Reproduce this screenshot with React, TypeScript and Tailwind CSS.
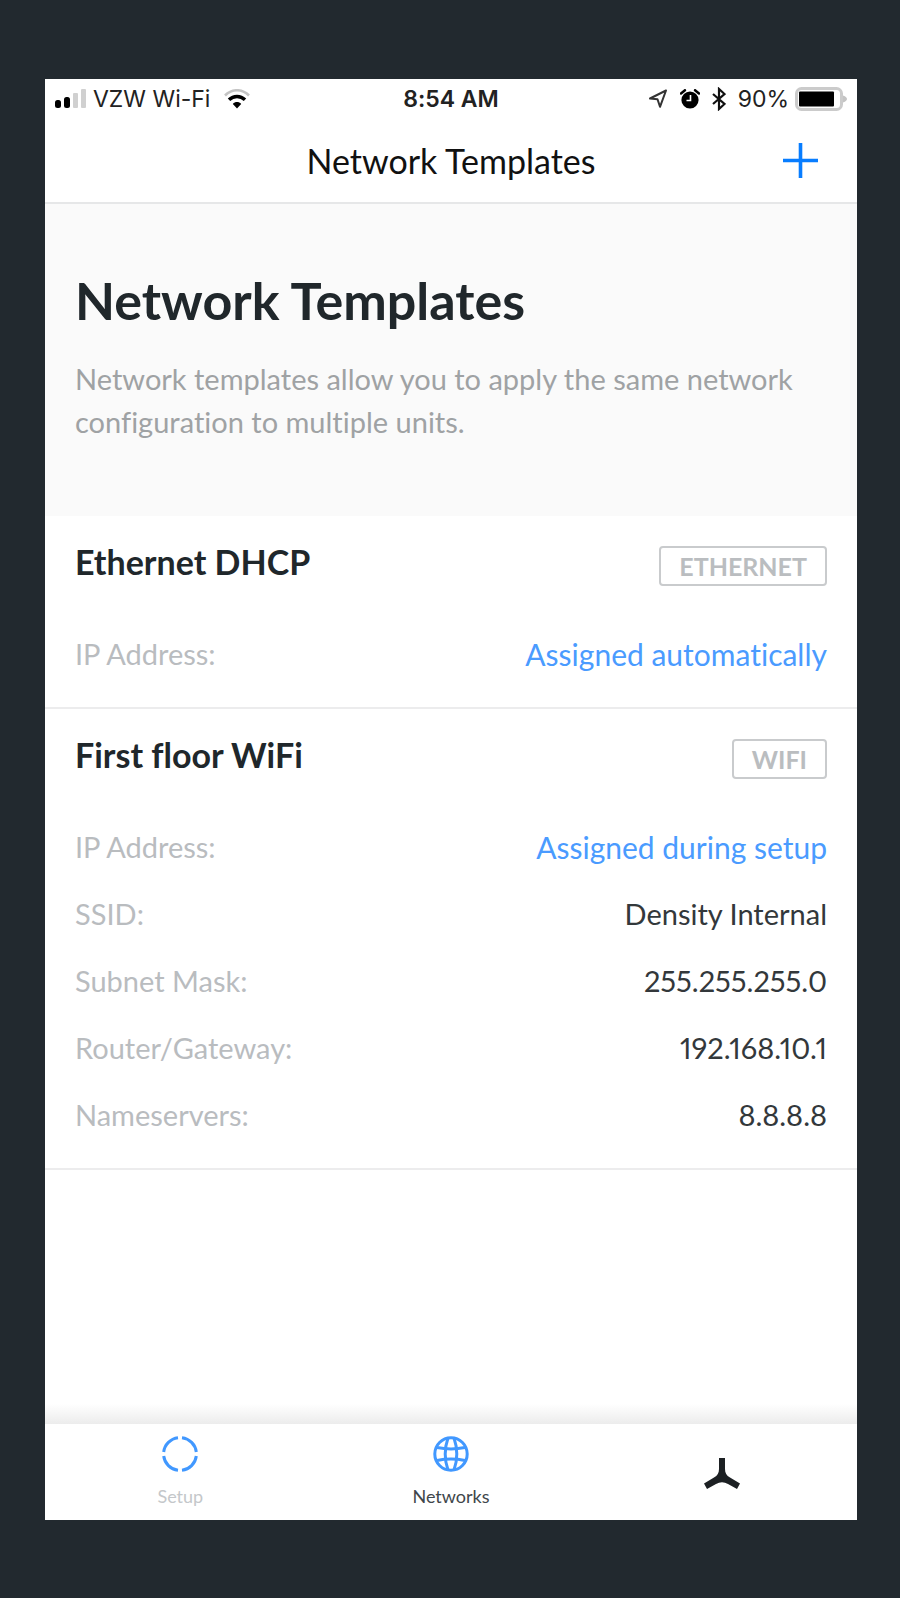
import type { ReactNode } from 'react';

type Row = { label: string; value: string; auto?: boolean };
type Template = { id: string; name: string; kind: string; rows: Row[] };

const templates: Template[] = [
  {
    id: 'ethernet',
    name: 'Ethernet DHCP',
    kind: 'ETHERNET',
    rows: [{ label: 'IP Address:', value: 'Assigned automatically', auto: true }],
  },
  {
    id: 'wifi',
    name: 'First floor WiFi',
    kind: 'WIFI',
    rows: [
      { label: 'IP Address:', value: 'Assigned during setup', auto: true },
      { label: 'SSID:', value: 'Density Internal' },
      { label: 'Subnet Mask:', value: '255.255.255.0' },
      { label: 'Router/Gateway:', value: '192.168.10.1' },
      { label: 'Nameservers:', value: '8.8.8.8' },
    ],
  },
];

function SignalIcon() {
  return (
    <svg width="32" height="20" viewBox="0 0 32 20" aria-hidden="true">
      <rect x="0" y="11" width="6" height="8" rx="2.500" fill="#000" />
      <rect x="9" y="8" width="6" height="11" rx="2.500" fill="#000" />
      <rect x="18" y="4" width="5" height="15" rx="1" fill="#d0d0d0" />
      <rect x="26" y="0" width="5" height="19" rx="1" fill="#d0d0d0" />
    </svg>
  );
}

function WifiIcon() {
  return (
    <svg width="26" height="20" viewBox="0 0 26 20" fill="none" aria-hidden="true">
      <path d="M1 6.500C8 -0.500 18 -0.500 25 6.500" stroke="#c4c4c4" strokeWidth="2.600" />
      <path d="M5 10.800C9.500 6.300 16.500 6.300 21 10.800" stroke="#000" strokeWidth="3.400" />
      <path d="M8.800 15C11 12.400 15 12.400 17.200 15L13 19.500Z" fill="#000" />
    </svg>
  );
}

function LocationIcon() {
  return (
    <svg width="20" height="20" viewBox="0 0 20 20" fill="none" aria-hidden="true">
      <path d="M18 1.500L2 9.500L9.500 10.200L12 17.800Z" stroke="#333" strokeWidth="2" strokeLinejoin="round" />
    </svg>
  );
}

function AlarmIcon() {
  return (
    <svg width="20" height="20" viewBox="0 0 20 20" fill="none" aria-hidden="true">
      <circle cx="10" cy="11" r="8.600" fill="#000" />
      <path d="M1 4.500L5 1.200M19 4.500L15 1.200" stroke="#000" strokeWidth="2.400" strokeLinecap="round" />
      <path d="M10.500 6V11.500H6.500" stroke="#fff" strokeWidth="1.600" />
    </svg>
  );
}

function BluetoothIcon() {
  return (
    <svg width="14" height="24" viewBox="0 0 14 24" fill="none" aria-hidden="true">
      <path d="M1 7L12.500 17L7 22V2L12.500 7L1 17" stroke="#111" strokeWidth="2.200" />
    </svg>
  );
}

function BatteryIcon() {
  return (
    <svg width="52" height="24" viewBox="0 0 52 24" aria-hidden="true">
      <rect x="1.500" y="1.500" width="45" height="21" rx="5" fill="#fff" stroke="#cbcbcb" strokeWidth="3" />
      <rect x="4" y="4.500" width="35" height="15" rx="1" fill="#000" />
      <path d="M48 8.500C51 9.500 52 11 52 12C52 13 51 14.500 48 15.500Z" fill="#c4c4c4" />
    </svg>
  );
}

function SetupIcon() {
  return (
    <svg width="36" height="36" viewBox="0 0 36 36" fill="none" stroke="#4198ff" strokeWidth="3" aria-hidden="true">
      <path d="M20 1.700A16.400 16.400 0 0 1 34.300 16M34.300 20A16.400 16.400 0 0 1 20 34.300M16 34.300A16.400 16.400 0 0 1 1.700 20M1.700 16A16.400 16.400 0 0 1 16 1.700" />
    </svg>
  );
}

function GlobeIcon() {
  return (
    <svg width="36" height="36" viewBox="0 0 36 36" fill="none" stroke="#4198ff" strokeWidth="3" aria-hidden="true">
      <circle cx="18" cy="18" r="16.200" />
      <path d="M15 2C11.500 12 11.500 24 15 34M21 2C24.500 12 24.500 24 21 34" />
      <path d="M4 11.500C13 13.300 23 13.300 32 11.500M4 24.500C13 22.700 23 22.700 32 24.500" />
    </svg>
  );
}

function DensityIcon() {
  return (
    <svg width="36" height="32" viewBox="0 0 36 32" fill="#1c2023" aria-hidden="true">
      <path d="M15 0H21V11C21 15 22.500 17.500 26 19.500L36 25.500L33 31L24 26C20 23.800 16 23.800 12 26L3 31L0 25.500L10 19.500C13.500 17.500 15 15 15 11Z" />
    </svg>
  );
}

function StatusBar() {
  return (
    <div className="grid h-10 grid-cols-3 items-center px-[10px] font-[Inter,sans-serif] text-[23px] leading-7 text-[#222]">
      <div className="flex items-center gap-[6px] whitespace-nowrap">
        <SignalIcon />
        <span>VZW Wi-Fi</span>
        <span className="pl-2">
          <WifiIcon />
        </span>
      </div>
      <div className="text-center font-semibold">8:54 AM</div>
      <div className="flex items-center justify-end gap-3">
        <LocationIcon />
        <AlarmIcon />
        <BluetoothIcon />
        <div className="flex items-center gap-[6px]">
          <span>90%</span>
          <BatteryIcon />
        </div>
      </div>
    </div>
  );
}

function TemplateCard({ template }: { template: Template }) {
  return (
    <section className="border-b-2 border-[#ececed] px-[30px] pb-5 pt-[30px]">
      <div className="flex items-start justify-between">
        <h2 className="text-[34px] font-bold leading-8 text-[#20272b]">{template.name}</h2>
        <span className="rounded-[4px] border-2 border-[#c9cbcd] px-[18px] text-[25px] font-bold leading-9 text-[#babdc0]">
          {template.kind}
        </span>
      </div>
      <dl className="pt-[34px]">
        {template.rows.map((row) => (
          <div key={row.label} className="flex h-[67px] items-center justify-between text-[29px] leading-8">
            <dt className="text-[#b9bcbf]">{row.label}</dt>
            <dd className={row.auto ? 'text-[30px] text-[#4a9bff]' : 'proportional-nums text-[#33383b]'}>{row.value}</dd>
          </div>
        ))}
      </dl>
    </section>
  );
}

function Tab({ icon, label, active }: { icon: ReactNode; label: string; active?: boolean }) {
  return (
    <button type="button" className="flex flex-col items-center gap-3 pt-3">
      {icon}
      <span className={active ? 'text-[#40464a]' : 'text-[#c4c7ca]'}>{label}</span>
    </button>
  );
}

export default function App() {
  return (
    <div className="flex min-h-screen flex-col bg-[#22292f] pb-[78px] pl-[45px] pr-[43px] pt-[79px] font-[Lato,sans-serif] [font-variant-ligatures:none]">
      <div className="flex flex-1 flex-col bg-white">
        <StatusBar />
        <header className="grid h-[85px] grid-cols-[1fr_auto_1fr] items-center border-b-2 border-[#e6e7e8]">
          <div className="col-start-2 text-[34px] leading-10 text-[#111]">Network Templates</div>
          <button type="button" aria-label="Add template" className="mr-[39px] justify-self-end">
            <svg width="35" height="35" viewBox="0 0 35 35" stroke="#087dff" strokeWidth="3.600" aria-hidden="true">
              <path d="M17.500 0V35M0 17.500H35" />
            </svg>
          </button>
        </header>

        <main className="flex-1">
          <div className="bg-[#fafafa] px-[30px] pb-[73px] pt-[66px]">
            <h1 className="text-[52px] font-bold leading-[60px] text-[#20272b]">Network Templates</h1>
            <p className="pt-[27px] text-[29px] leading-[43px] text-[#9fa2a4]">
              Network templates allow you to apply the same network configuration to multiple units.
            </p>
          </div>
          {templates.map((t) => (
            <TemplateCard key={t.id} template={t} />
          ))}
        </main>

        <div className="h-5 bg-linear-to-b from-white to-[#ececec]" />
        <nav className="grid h-24 grid-cols-3 bg-white text-[18px] leading-6">
          <Tab icon={<SetupIcon />} label="Setup" />
          <Tab icon={<GlobeIcon />} label="Networks" active />
          <button type="button" aria-label="Density" className="flex items-center justify-center pt-1">
            <DensityIcon />
          </button>
        </nav>
      </div>
    </div>
  );
}
